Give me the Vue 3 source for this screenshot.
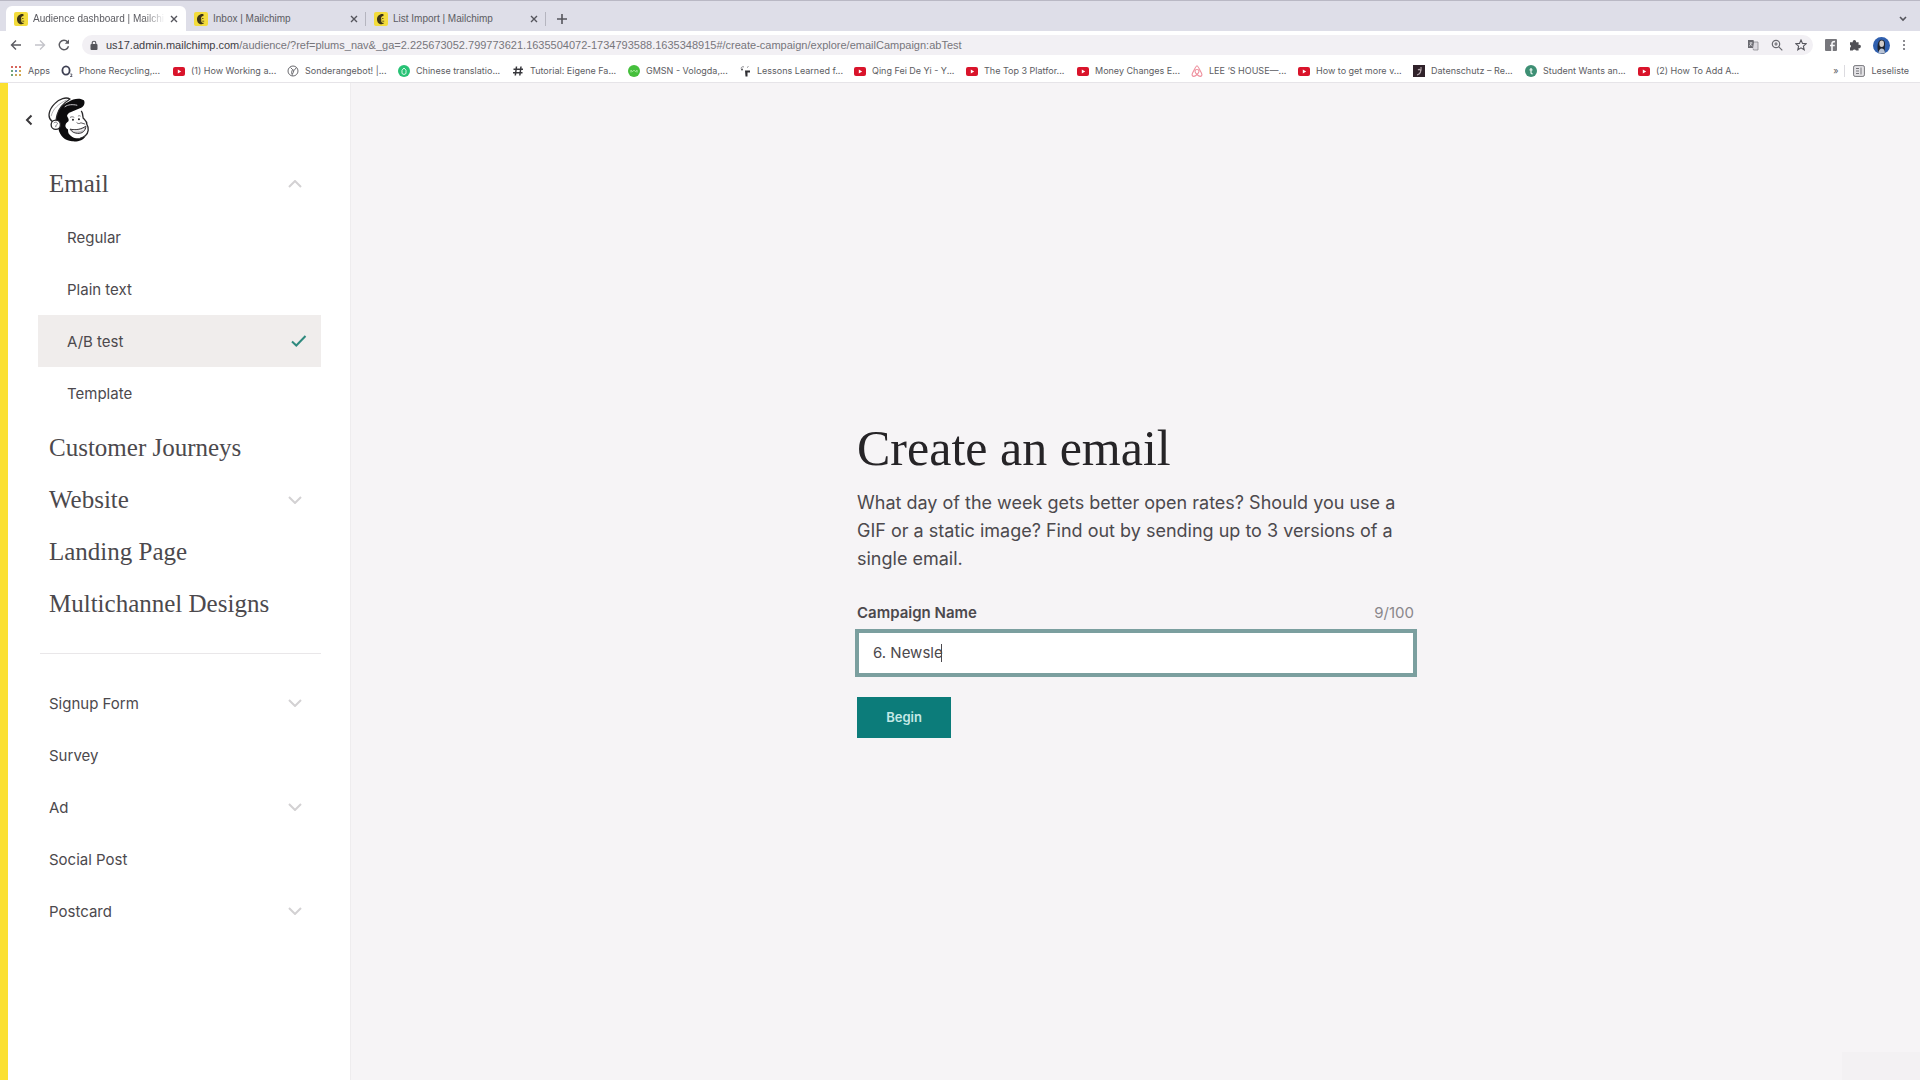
<script setup>
import { ref } from 'vue'

const tabs = [
  { title: 'Audience dashboard | Mailchi', active: true },
  { title: 'Inbox | Mailchimp', active: false },
  { title: 'List Import | Mailchimp', active: false },
]

const bookmarks = [
  { icon: 'apps', label: 'Apps' },
  { icon: 'o2', label: 'Phone Recycling,...' },
  { icon: 'video', label: '(1) How Working a...' },
  { icon: 'globe', label: 'Sonderangebot! |...' },
  { icon: 'green', label: 'Chinese translatio...' },
  { icon: 'hash', label: 'Tutorial: Eigene Fa...' },
  { icon: 'lime', label: 'GMSN - Vologda,...' },
  { icon: 'lessons', label: 'Lessons Learned f...' },
  { icon: 'video', label: 'Qing Fei De Yi - Y...' },
  { icon: 'video', label: 'The Top 3 Platfor...' },
  { icon: 'video', label: 'Money Changes E...' },
  { icon: 'airbnb', label: 'LEE ‘S HOUSE—...' },
  { icon: 'video', label: 'How to get more v...' },
  { icon: 'dark', label: 'Datenschutz – Re...' },
  { icon: 'teal', label: 'Student Wants an...' },
  { icon: 'video', label: '(2) How To Add A...' },
]

const emailTypes = ['Regular', 'Plain text', 'A/B test', 'Template']
const selected = ref('A/B test')

const channels = [
  { label: 'Customer Journeys' },
  { label: 'Website', expandable: true },
  { label: 'Landing Page' },
  { label: 'Multichannel Designs' },
]

const others = [
  { label: 'Signup Form', expandable: true },
  { label: 'Survey' },
  { label: 'Ad', expandable: true },
  { label: 'Social Post' },
  { label: 'Postcard', expandable: true },
]

const campaignName = ref('6. Newsle')
</script>

<template>
  <div class="window">
    <header class="browser">
      <div class="tabstrip">
        <div v-for="tab in tabs" :key="tab.title" class="tab" :class="{ active: tab.active }">
          <svg class="favicon" viewBox="0 0 14 14" aria-hidden="true">
            <rect width="14" height="14" rx="2" fill="#f3dc3c" />
            <path d="M9.500 2.200C6 1.400 3 4 3 7.200c0 3 2 5 4.600 5 1.300 0 2.300-.5 2.600-1.400-2 .4-3.200-.7-2.900-2.300.2-.9-.1-1.500-.2-2.400 0-1 .7-1.900 2.400-2.200z" fill="#3c3517" />
            <path d="M8 6.500h1.500M8.200 9.200h2" stroke="#6b5f24" stroke-width="1" fill="none" />
          </svg>
          <span class="tab-title">{{ tab.title }}</span>
          <button class="tab-close" aria-label="Close tab">
            <svg width="8" height="8" viewBox="0 0 8 8"><path d="M1 1l6 6M7 1L1 7" stroke="#55555c" stroke-width="1.400" /></svg>
          </button>
        </div>
        <button class="new-tab" aria-label="New tab">
          <svg width="10" height="10" viewBox="0 0 10 10"><path d="M5 0v10M0 5h10" stroke="#55555c" stroke-width="1.600" /></svg>
        </button>
        <button class="tab-search" aria-label="Search tabs">
          <svg width="8" height="6" viewBox="0 0 8 6"><path d="M1 1l3 3 3-3" stroke="#55555c" stroke-width="1.600" fill="none" /></svg>
        </button>
      </div>

      <div class="toolbar">
        <button aria-label="Back">
          <svg width="12" height="12" viewBox="0 0 12 12"><path d="M11 6H2M6 1.500L1.500 6 6 10.500" stroke="#5c5c62" stroke-width="1.400" fill="none" /></svg>
        </button>
        <button aria-label="Forward">
          <svg width="12" height="12" viewBox="0 0 12 12"><path d="M1 6h9M6 1.500L10.500 6 6 10.500" stroke="#c4c4ca" stroke-width="1.400" fill="none" /></svg>
        </button>
        <button aria-label="Reload">
          <svg width="12" height="12" viewBox="0 0 12 12"><path d="M10.500 7.200A4.700 4.700 0 1 1 9.600 3" stroke="#5c5c62" stroke-width="1.400" fill="none" /><path d="M11 .5v4.300H6.800z" fill="#5c5c62" /></svg>
        </button>
        <div class="omnibox">
          <svg class="lock" width="8" height="10" viewBox="0 0 8 10"><rect y="4" x=".5" width="7" height="6" rx="1" fill="#55555c" /><path d="M2.200 4.500V3a1.800 1.800 0 0 1 3.600 0v1.500" stroke="#55555c" stroke-width="1.100" fill="none" /></svg>
          <a class="url" href="#"><span class="host">us17.admin.mailchimp.com</span>/audience/?ref=plums_nav&amp;_ga=2.225673052.799773621.1635504072-1734793588.1635348915#/create-campaign/explore/emailCampaign:abTest</a>
          <button aria-label="Translate">
            <svg width="12" height="12" viewBox="0 0 12 12"><path d="M1 1h5.500l2 8H1z" fill="#6a6a70" /><path d="M7 3h4v8H6.500L6 9.500" fill="#dcdae0" stroke="#8a8a90" stroke-width=".8" /><path d="M2.500 4h3M4 3v1c0 1.500-.8 2.500-1.800 3M3 5l2.500 2" stroke="#f1eff3" stroke-width=".7" fill="none" /></svg>
          </button>
          <button aria-label="Zoom">
            <svg width="12" height="12" viewBox="0 0 12 12"><circle cx="5" cy="5" r="3.700" fill="none" stroke="#6a6a70" stroke-width="1.200" /><path d="M7.800 7.800L11.300 11.300M3.300 5h3.400M5 3.300v3.400" stroke="#6a6a70" stroke-width="1.200" /></svg>
          </button>
          <button aria-label="Bookmark this page">
            <svg width="12" height="12" viewBox="0 0 12 12"><path d="M6 1l1.500 3.400 3.700.4-2.800 2.400.8 3.600L6 8.900l-3.200 1.900.8-3.600L.8 4.800l3.700-.4z" fill="none" stroke="#55555c" stroke-width="1.100" /></svg>
          </button>
        </div>
        <button aria-label="Facebook extension">
          <svg width="12" height="12" viewBox="0 0 12 12"><rect width="12" height="12" rx="1" fill="#77777c" /><path d="M7 12V4.500C7 3 8 2.500 10 2.700M5 6.500h4.800" stroke="#f7f7f9" stroke-width="1.600" fill="none" /></svg>
        </button>
        <button aria-label="Extensions">
          <svg width="12" height="12" viewBox="0 0 12 12"><path d="M1 3.200h2.800a1.700 1.700 0 1 1 3.200 0h2.600v2.700a1.700 1.700 0 1 1 0 3.200v2.500H7a1.700 1.700 0 0 0-3.200 0H1V8.700a1.600 1.600 0 0 0 0-2.900z" fill="#505056" /></svg>
        </button>
        <button aria-label="Profile">
          <svg width="17" height="17" viewBox="0 0 17 17"><circle cx="8.500" cy="8.500" r="8.500" fill="#2f5fae" /><path d="M5 14c-.8-4-.7-9 2-11 2-1 5 0 5 3 0 3-.5 7 0 10-2 1-5 1-7-2z" fill="#1e2430" /><ellipse cx="8.700" cy="6.800" rx="2.300" ry="3.300" fill="#d3cdc9" /><path d="M5.500 16c.3-3 1.500-4.500 3.200-4.500s3 1.500 3.300 4.300a8.500 8.500 0 0 1-6.500.2z" fill="#b9c4d6" /></svg>
        </button>
        <button aria-label="Menu">
          <svg width="4" height="12" viewBox="0 0 4 12" fill="#66666c"><circle cx="2" cy="2" r="1" /><circle cx="2" cy="6" r="1" /><circle cx="2" cy="10" r="1" /></svg>
        </button>
      </div>

      <nav class="bookmarks" aria-label="Bookmarks">
        <a v-for="mark in bookmarks" :key="mark.label" href="#" class="bookmark">
          <svg class="mark" viewBox="0 0 12 12" aria-hidden="true">
            <g v-if="mark.icon === 'apps'">
              <rect x="1" y="1" width="2" height="2" fill="#d7665c" /><rect x="5" y="1" width="2" height="2" fill="#d7665c" /><rect x="9" y="1" width="2" height="2" fill="#d7665c" />
              <rect x="1" y="5" width="2" height="2" fill="#6fa378" /><rect x="5" y="5" width="2" height="2" fill="#6d8fc4" /><rect x="9" y="5" width="2" height="2" fill="#d3a851" />
              <rect x="1" y="9" width="2" height="2" fill="#6fa378" /><rect x="5" y="9" width="2" height="2" fill="#c7a45b" /><rect x="9" y="9" width="2" height="2" fill="#d3a851" />
            </g>
            <g v-else-if="mark.icon === 'o2'" fill="none" stroke="#3d3f52">
              <ellipse cx="5" cy="5.500" rx="3.600" ry="4.200" stroke-width="1.800" />
              <path d="M9.300 9h1.500v1.300l-1.500 1.200h2" stroke-width=".8" />
            </g>
            <g v-else-if="mark.icon === 'video'">
              <rect y="2" width="12" height="9" rx="2" fill="#d9142b" /><path d="M4.800 4.500v4L8.200 6.500z" fill="#fff" />
            </g>
            <g v-else-if="mark.icon === 'globe'" fill="none" stroke="#6b6b70">
              <circle cx="6" cy="6" r="5" /><path d="M3.500 2.500l2 2-1 3 1 3M9.500 2.500L7 5.500 5.500 9M7 5.500L5.500 4.500" />
            </g>
            <g v-else-if="mark.icon === 'green'">
              <circle cx="6" cy="6" r="6" fill="#27c275" /><path d="M4 8.500V5.200L6 3l2 2.200v3.300L6 9.500z" fill="none" stroke="#d8f7e6" stroke-width="1" />
            </g>
            <path v-else-if="mark.icon === 'hash'" d="M4.500 1.500l-1.200 9M9 1.500l-1.200 9M1.500 4.200h9.500M1 7.800h9.500" stroke="#38383d" stroke-width="1.500" />
            <g v-else-if="mark.icon === 'lime'">
              <circle cx="6" cy="6" r="6" fill="#45bf3c" /><path d="M3 7.500V5.200l1.500 1.500L6 5.200l1.500 1.500L9 5.200v2.300" fill="none" stroke="#a9eda0" stroke-width="1" />
            </g>
            <g v-else-if="mark.icon === 'lessons'">
              <path d="M2 3.500A2 2 0 0 1 5 2M8 2.500l1.500-1" stroke="#8b8b90" fill="none" /><path d="M6 5.500h5v2H8.500v4H6.500z" fill="#2f2f34" /><circle cx="3" cy="4.500" r="1" fill="#55555a" />
            </g>
            <g v-else-if="mark.icon === 'airbnb'" fill="none" stroke="#ee8f9d" stroke-width="1.100">
              <path d="M6 .8c1 0 1.300.8 4.700 8 .7 1.500-.3 2.600-1.500 2.600C7.500 11.400 4 8 4 6.300 4 5 5 4.500 6 4.500s2 .5 2 1.800c0 1.700-3.500 5.100-5.200 5.100-1.200 0-2.200-1.100-1.500-2.600C4.700 1.600 5 .8 6 .8z" />
            </g>
            <g v-else-if="mark.icon === 'dark'">
              <rect width="12" height="12" fill="#30222a" /><path d="M4 10c3-1 4.500-4 4-8M5 5c1-1 2-1 2.500 1" stroke="#b7a9ae" stroke-width="1.100" fill="none" />
            </g>
            <g v-else>
              <circle cx="6" cy="6" r="6" fill="#3e8f74" /><path d="M6 3v4.500c0 1 .6 1.400 1.600 1.200M4.500 4.800h3" stroke="#e3f3ec" stroke-width="1.300" fill="none" />
            </g>
          </svg>
          <span>{{ mark.label }}</span>
        </a>
        <div class="bookmark-end">
          <button class="overflow" aria-label="More bookmarks">»</button>
          <a href="#" class="reading">
            <svg class="mark" viewBox="0 0 12 12"><rect x=".6" y=".6" width="10.800" height="10.800" rx="1.500" fill="#e4e3e6" stroke="#77777c" /><path d="M3 3.500h3M3 6h3M3 8.500h3M8 2.500v7" stroke="#77777c" /></svg>
            <span>Leseliste</span>
          </a>
        </div>
      </nav>
    </header>

    <div class="page">
      <aside class="sidebar">
        <div class="brand">
          <button class="back" aria-label="Go back">
            <svg width="8" height="12" viewBox="0 0 8 12"><path d="M6.500 1.500L2 6l4.500 4.500" stroke="#3a383b" stroke-width="2" fill="none" /></svg>
          </button>
          <svg class="logo" viewBox="0 0 126 136" role="img" aria-label="Mailchimp">
            <path d="M24 70C22 46 38 24 62 14C76 4 98 2 108 10C113 18 108 32 96 34L62 48L62 110C74 124 98 126 114 118C106 132 88 136 72 134C50 132 36 118 31 97Z" fill="#0d0c0e" />
            <path d="M12 74C-4 62 2 38 20 20C34 5 54 -1 66 6C44 20 32 34 27 54C25 62 24 66 24 72Z" fill="#fff" stroke="#2a292b" stroke-width="4" stroke-linejoin="round" />
            <path d="M9 58C14 36 32 20 56 9" fill="none" stroke="#8a888d" stroke-width="2" />
            <path d="M58 54C64 44 72 50 80 48C88 46 92 38 100 42C105 48 104 56 106 64C112 70 118 74 117 83C124 94 122 108 113 116C102 126 84 128 72 120C62 113 60 106 60 98C52 94 50 87 54 80C58 74 62 75 63 70C63 64 55 60 58 54Z" fill="#fff" />
            <path d="M100 42C105 48 104 56 106 64C112 70 118 74 117 83C124 94 122 108 113 116C108 121 102 124 96 125" fill="none" stroke="#2a292b" stroke-width="4" />
            <path d="M50 30C60 22 74 22 88 25" stroke="#c9c7cc" stroke-width="3" fill="none" />
            <circle cx="23" cy="84" r="14" fill="#fff" stroke="#2a292b" stroke-width="4" />
            <path d="M17 79C21 74 29 76 28 81C27 85 22 84 23 91" stroke="#77767a" stroke-width="3" fill="none" />
            <path d="M66 62C70 59 75 59 79 62M90 58C93 56 96 56 98 58" stroke="#77767a" stroke-width="3" fill="none" />
            <circle cx="75" cy="69" r="3" fill="#19181a" /><circle cx="93" cy="67" r="3" fill="#19181a" />
            <path d="M86 77C90 81 95 81 99 78L112 82" stroke="#5a585c" stroke-width="3" fill="none" />
            <path d="M66 97C82 101 100 98 114 88C114 103 102 111 89 110C78 109 71 105 66 97Z" fill="#c2c0c4" stroke="#3a383b" stroke-width="3" />
            <path d="M75 102C87 104 98 102 108 97" stroke="#fff" stroke-width="3" fill="none" />
          </svg>
        </div>

        <nav aria-label="Campaign types">
          <ul class="menu">
            <li>
              <button class="item category" aria-expanded="true">
                Email
                <svg class="chevron" width="14" height="8" viewBox="0 0 14 8"><path d="M1 7l6-6 6 6" /></svg>
              </button>
              <ul class="menu submenu">
                <li v-for="type in emailTypes" :key="type">
                  <button class="item sub" :class="{ selected: selected === type }" @click="selected = type">
                    {{ type }}
                    <svg v-if="selected === type" class="check" width="16" height="12" viewBox="0 0 16 12"><path d="M1 6.500L5.300 10.500 14.500 1" /></svg>
                  </button>
                </li>
              </ul>
            </li>
            <li v-for="channel in channels" :key="channel.label">
              <button class="item category">
                {{ channel.label }}
                <svg v-if="channel.expandable" class="chevron" width="14" height="8" viewBox="0 0 14 8"><path d="M1 1l6 6 6-6" /></svg>
              </button>
            </li>
          </ul>
          <hr />
          <ul class="menu">
            <li v-for="other in others" :key="other.label">
              <button class="item">
                {{ other.label }}
                <svg v-if="other.expandable" class="chevron" width="14" height="8" viewBox="0 0 14 8"><path d="M1 1l6 6 6-6" /></svg>
              </button>
            </li>
          </ul>
        </nav>
      </aside>

      <main class="content">
        <form class="create" @submit.prevent>
          <h1>Create an email</h1>
          <p>What day of the week gets better open rates? Should you use a GIF or a static image? Find out by sending up to 3 versions of a single email.</p>
          <div class="label-row">
            <label for="campaign-name">Campaign Name</label>
            <span class="counter">{{ campaignName.length }}/100</span>
          </div>
          <div class="field">
            <input id="campaign-name" v-model="campaignName" type="text" maxlength="100" autocomplete="off" />
            <span class="caret"></span>
          </div>
          <button class="begin" type="submit">Begin</button>
        </form>
        <div class="corner"></div>
      </main>
    </div>
  </div>
</template>

<style>
body {
  margin: 0;
  background: #f6f4f6;
}
</style>

<style scoped>
* {
  box-sizing: border-box;
}

button {
  margin: 0;
  padding: 0;
  border: 0;
  background: none;
  font: inherit;
  color: inherit;
}

a {
  color: inherit;
  text-decoration: none;
}

svg {
  display: block;
  flex: none;
}

.window {
  display: flex;
  flex-direction: column;
  min-height: 100vh;
  font-family: Inter, "Liberation Sans", sans-serif;
  color: #4c494d;
}

/* Browser chrome */
.browser {
  border-bottom: 1px solid #e6e4e8;
  background: #fff;
  font-size: 10px;
  color: #5c5c62;
}

.tabstrip {
  display: flex;
  align-items: flex-end;
  height: 31px;
  padding: 0 13px 0 6px;
  border-top: 1px solid #b9b8c4;
  background: #dedee8;
}

.tab {
  display: flex;
  align-items: center;
  gap: 5px;
  width: 180px;
  height: 25px;
  padding: 0 8px;
}

.tab.active {
  border-radius: 6px 6px 0 0;
  background: #fff;
}

.tab:not(.active) {
  background: linear-gradient(#b5b5bf, #b5b5bf) right center / 1px 14px no-repeat;
}

.favicon {
  width: 14px;
  height: 14px;
}

.tab-title {
  flex: 1;
  font-family: "Liberation Sans", sans-serif;
  white-space: nowrap;
}

.active .tab-title {
  mask-image: linear-gradient(90deg, #000 84%, transparent);
}

.new-tab {
  margin: 0 auto 7px 11px;
}

.tab-search {
  margin-bottom: 9px;
}

.toolbar {
  display: flex;
  align-items: center;
  gap: 12px;
  height: 28px;
  padding: 0 14px 0 10px;
}

.omnibox {
  display: flex;
  flex: 1;
  align-items: center;
  gap: 12px;
  height: 20px;
  padding: 0 6px 0 8px;
  border-radius: 10px;
  background: #f2f0f4;
}

.lock {
  margin-right: -4px;
}

.url {
  flex: 1;
  font-family: "Liberation Sans", sans-serif;
  font-size: 11px;
  color: #77767c;
  white-space: nowrap;
}

.host {
  color: #3f3e44;
}

.bookmarks {
  display: grid;
  grid-template-columns: 51px 112px 114px 111px 114px 116px 111px 115px 112px 111px 114px 107px 115px 112px 113px 113px 1fr;
  align-items: center;
  height: 23px;
  padding: 0 11px 0 10px;
  font-size: 9px;
}

.bookmark,
.reading,
.bookmark-end {
  display: flex;
  align-items: center;
  gap: 6px;
  white-space: nowrap;
}

.mark {
  width: 12px;
  height: 12px;
}

.bookmark-end {
  justify-content: flex-end;
}

.reading {
  padding-left: 8px;
  border-left: 1px solid #dcdbe0;
}

/* Page */
.page {
  display: flex;
  flex: 1;
}

.sidebar {
  width: 351px;
  padding: 14px 29px 0 30px;
  border-left: 8px solid #fbe030;
  border-right: 1px solid #eeecee;
  background: #fff;
}

.brand {
  display: flex;
  align-items: center;
  gap: 15px;
  margin-left: -13px;
}

.logo {
  width: 42px;
  height: 45px;
}

.menu {
  margin: 0;
  padding: 0;
  list-style: none;
}

.brand + nav {
  padding-top: 16px;
}

.submenu {
  padding: 1px 0 3px;
}

.item {
  display: flex;
  align-items: center;
  justify-content: space-between;
  width: 100%;
  height: 52px;
  padding: 0 19px 0 11px;
  font-size: 15px;
  text-align: left;
}

.category {
  font-family: "Liberation Serif", serif;
  font-size: 25px;
}

.sub {
  padding: 0 14px 0 29px;
}

.selected {
  background: #f0edec;
}

.chevron path {
  fill: none;
  stroke: #d3d1d3;
  stroke-width: 2;
}

.check path {
  fill: none;
  stroke: #2f8a7e;
  stroke-width: 2;
}

hr {
  height: 1px;
  margin: 23px 0 23px 2px;
  border: 0;
  background: #e9e7e9;
}

.content {
  position: relative;
  display: flex;
  flex: 1;
  align-items: center;
  justify-content: center;
}

.create {
  width: 557px;
  padding-bottom: 6px;
}

h1 {
  margin: 0;
  font-family: "Liberation Serif", serif;
  font-size: 50px;
  font-weight: 400;
  line-height: 56px;
  color: #262427;
}

p {
  margin: 13px 0 0;
  font-size: 18px;
  line-height: 28px;
}

.label-row {
  display: flex;
  align-items: center;
  justify-content: space-between;
  height: 24px;
  margin-top: 28px;
  font-size: 15px;
}

label {
  font-weight: 600;
}

.counter {
  color: #8a878b;
}

.field {
  position: relative;
  margin: 4px -3px 0 -2px;
}

input {
  display: block;
  width: 100%;
  height: 48px;
  padding: 0 14px;
  border: 4px solid #7b9f9f;
  border-radius: 0;
  outline: 0;
  background: #fff;
  font: inherit;
  font-size: 15px;
  color: #4c494d;
}

.caret {
  position: absolute;
  top: 15px;
  left: 86px;
  width: 1px;
  height: 18px;
  background: #4c494d;
}

.begin {
  width: 94px;
  height: 41px;
  margin-top: 20px;
  background: #0c7c7a;
  font-size: 13px;
  font-weight: 600;
  color: #c4e9e6;
}

.corner {
  position: absolute;
  right: 0;
  bottom: 0;
  width: 78px;
  height: 28px;
  background: #f3f1f3;
}
</style>
